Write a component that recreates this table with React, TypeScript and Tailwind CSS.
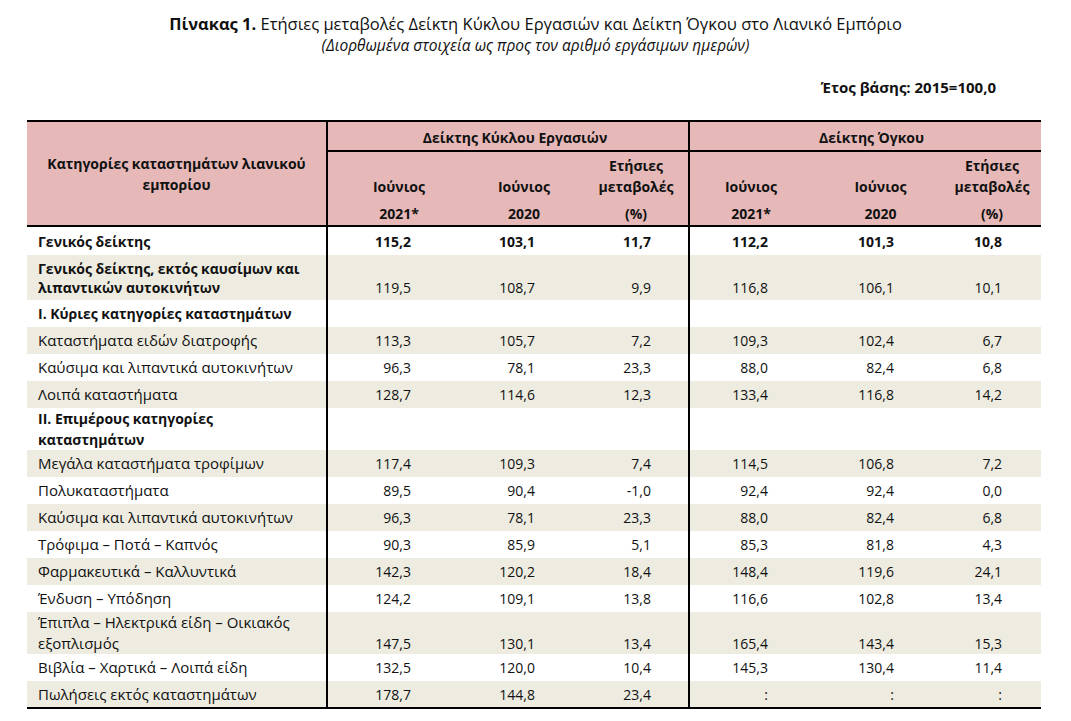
type Row = {
	label: string[]
	values: string[]
	boldLabel?: boolean
	boldValues?: boolean
	shaded?: boolean
	h: string
}

const rows: Row[] = [
	{ label: ['Γενικός δείκτης'], values: ['115,2', '103,1', '11,7', '112,2', '101,3', '10,8'], boldLabel: true, boldValues: true, h: 'h-[29px]' },
	{ label: ['Γενικός δείκτης, εκτός καυσίμων και', 'λιπαντικών αυτοκινήτων'], values: ['119,5', '108,7', '9,9', '116,8', '106,1', '10,1'], boldLabel: true, shaded: true, h: 'h-[45px]' },
	{ label: ['I. Κύριες κατηγορίες καταστημάτων'], values: ['', '', '', '', '', ''], boldLabel: true, h: 'h-[27px]' },
	{ label: ['Καταστήματα ειδών διατροφής'], values: ['113,3', '105,7', '7,2', '109,3', '102,4', '6,7'], shaded: true, h: 'h-[27px]' },
	{ label: ['Καύσιμα και λιπαντικά αυτοκινήτων'], values: ['96,3', '78,1', '23,3', '88,0', '82,4', '6,8'], h: 'h-[27px]' },
	{ label: ['Λοιπά καταστήματα'], values: ['128,7', '114,6', '12,3', '133,4', '116,8', '14,2'], shaded: true, h: 'h-[27px]' },
	{ label: ['II. Επιμέρους κατηγορίες', 'καταστημάτων'], values: ['', '', '', '', '', ''], boldLabel: true, h: 'h-[42px]' },
	{ label: ['Μεγάλα καταστήματα τροφίμων'], values: ['117,4', '109,3', '7,4', '114,5', '106,8', '7,2'], shaded: true, h: 'h-[27px]' },
	{ label: ['Πολυκαταστήματα'], values: ['89,5', '90,4', '-1,0', '92,4', '92,4', '0,0'], h: 'h-[27px]' },
	{ label: ['Καύσιμα και λιπαντικά αυτοκινήτων'], values: ['96,3', '78,1', '23,3', '88,0', '82,4', '6,8'], shaded: true, h: 'h-[27px]' },
	{ label: ['Τρόφιμα – Ποτά – Καπνός'], values: ['90,3', '85,9', '5,1', '85,3', '81,8', '4,3'], h: 'h-[27px]' },
	{ label: ['Φαρμακευτικά – Καλλυντικά'], values: ['142,3', '120,2', '18,4', '148,4', '119,6', '24,1'], shaded: true, h: 'h-[27px]' },
	{ label: ['Ένδυση – Υπόδηση'], values: ['124,2', '109,1', '13,8', '116,6', '102,8', '13,4'], h: 'h-[27px]' },
	{ label: ['Έπιπλα – Ηλεκτρικά είδη – Οικιακός', 'εξοπλισμός'], values: ['147,5', '130,1', '13,4', '165,4', '143,4', '15,3'], shaded: true, h: 'h-[41px]' },
	{ label: ['Βιβλία – Χαρτικά – Λοιπά είδη'], values: ['132,5', '120,0', '10,4', '145,3', '130,4', '11,4'], h: 'h-[27px]' },
	{ label: ['Πωλήσεις εκτός καταστημάτων'], values: ['178,7', '144,8', '23,4', ':', ':', ':'], shaded: true, h: 'h-[27px]' },
]

// right padding per value column, read off the original
const valuePad = ['pr-[37px]', 'pr-[33px]', 'pr-[37px]', 'pr-[38px]', 'pr-[29px]', 'pr-[39px]']
const headPad = ['pl-[22px]', 'pl-[32px]', 'pl-[16px]', 'pl-[6px]', 'pl-[32px]', 'pl-[20px]']

function SubHead({ i, year }: { i: number; year: string }) {
	return (
		<th className={`font-bold text-center align-top p-0 ${headPad[i]} ${i === 2 ? 'border-r-2 border-black' : ''}`}>
			<div className="h-[24px]" />
			<div className="h-[27px] leading-[22px]">Ιούνιος</div>
			<div className="leading-[22px]">{year}</div>
		</th>
	)
}

function ChangeHead({ i }: { i: number }) {
	return (
		<th className={`font-bold text-center align-top p-0 ${headPad[i]} ${i === 2 ? 'border-r-2 border-black' : ''}`}>
			<div className="pt-[3px] leading-[21px]">Ετήσιες</div>
			<div className="h-[27px] leading-[21px]">μεταβολές</div>
			<div className="leading-[22px]">(%)</div>
		</th>
	)
}

export default function App() {
	return (
		<div className="w-[1071px] h-[721px] bg-white text-[#111] font-['Open_Sans',sans-serif] overflow-hidden">
			{/* Title */}
			<div className="pt-[13px] text-center text-[16.5px] leading-[22px]">
				<span className="font-bold">Πίνακας 1.</span> Ετήσιες μεταβολές Δείκτη Κύκλου Εργασιών και Δείκτη Όγκου στο Λιανικό Εμπόριο
			</div>
			<div className="text-center italic text-[15.5px] leading-[21px]">(Διορθωμένα στοιχεία ως προς τον αριθμό εργάσιμων ημερών)</div>
			<div className="flex justify-end pr-[75px] pt-[21px] font-bold text-[15px] leading-[20px]">Έτος βάσης: 2015=100,0</div>

			<table className="ml-[27px] mt-[23px] w-[1014px] table-fixed border-collapse text-[14px]">
				<colgroup>
					<col className="w-[300px]" />
					<col className="w-[121px]" />
					<col className="w-[120px]" />
					<col className="w-[121px]" />
					<col className="w-[117px]" />
					<col className="w-[117px]" />
					<col className="w-[118px]" />
				</colgroup>
				<thead className="bg-[#e6b9b8]">
					<tr className="border-t-2 border-black h-[30px]">
						<th rowSpan={2} className="border-r-2 border-b-2 border-black font-bold text-center leading-[21px] px-4">
							Κατηγορίες καταστημάτων λιανικού
							<br />
							εμπορίου
						</th>
						<th colSpan={3} className="border-r-2 border-b-2 border-black font-bold text-center pl-[14px] pt-[3px]">
							Δείκτης Κύκλου Εργασιών
						</th>
						<th colSpan={3} className="border-b-2 border-black font-bold text-center pl-[12px] pt-[3px]">
							Δείκτης Όγκου
						</th>
					</tr>
					<tr className="border-b-2 border-black h-[72px]">
						<SubHead i={0} year="2021*" />
						<SubHead i={1} year="2020" />
						<ChangeHead i={2} />
						<SubHead i={3} year="2021*" />
						<SubHead i={4} year="2020" />
						<ChangeHead i={5} />
					</tr>
				</thead>
				<tbody>
					{rows.map((row, r) => {
						const tall = row.label.length > 1
						// first label row of the tall rows: 19px apart, the others 21px
						const lh = r === 1 ? 'leading-[19px]' : 'leading-[21px]'
						return (
							<tr
								key={r}
								className={`${row.shaded ? 'bg-[#eeece1]' : 'bg-white'} ${row.h} ${r === rows.length - 1 ? 'border-b-2 border-black' : ''}`}
							>
								<td className={`border-r-2 border-black pl-[11px] ${lh} align-middle ${row.boldLabel ? 'font-bold' : 'text-[15px]'}`}>
									{row.label.map((l, i) => (
										<div key={i}>{l}</div>
									))}
								</td>
								{row.values.map((v, i) => (
									<td
										key={i}
										className={`text-right ${valuePad[i]} ${lh} align-middle ${row.boldValues ? 'font-bold' : ''} ${i === 2 ? 'border-r-2 border-black' : ''}`}
									>
										{tall && <div>&nbsp;</div>}
										<div>{v}</div>
									</td>
								))}
							</tr>
						)
					})}
				</tbody>
			</table>
		</div>
	)
}
